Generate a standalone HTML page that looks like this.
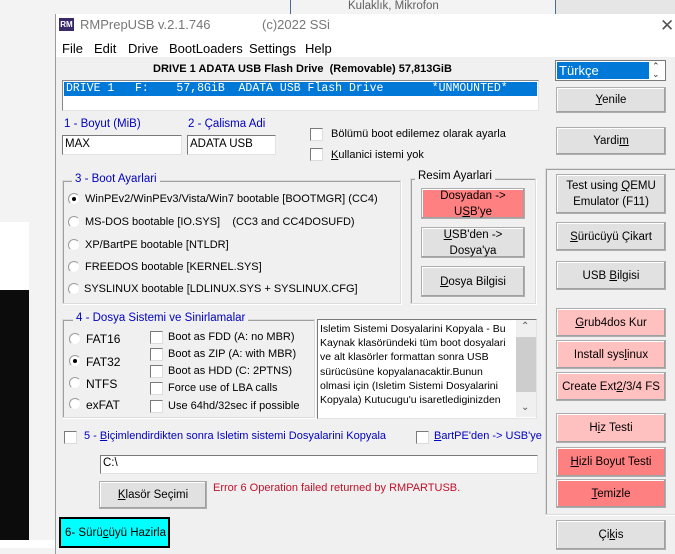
<!DOCTYPE html>
<html><head><meta charset="utf-8"><style>
*{margin:0;padding:0;box-sizing:border-box}
body{width:675px;height:548px;overflow:hidden;position:relative;background:#f3f3f3;font-family:"Liberation Sans",Arial,sans-serif;font-size:11px;color:#000}
.a{position:absolute;white-space:nowrap}
.win{position:absolute;left:55px;top:14px;width:630px;height:540px;background:#f0f0f0;border-left:1px solid #9a9a9a}
.btn{position:absolute;background:#e1e1e1;border:1px solid #adadad;box-shadow:inset -1px -1px 0 #a0a0a0,inset 1px 1px 0 #fff;display:flex;align-items:center;justify-content:center;text-align:center;line-height:16px;font-size:11.5px;white-space:nowrap}
.pink{background:#ffc0c0}.red{background:#ff8080}
.inp{position:absolute;background:#fff;border:1px solid #7a7a7a;border-right-color:#e3e3e3;border-bottom-color:#e3e3e3;padding:2px 2px;font-size:11.5px}
.grp{position:absolute;border:1px solid #dcdcdc;box-shadow:inset 1px 1px 0 #a0a0a0, 1px 1px 0 #fff}
.lg{position:absolute;background:#f0f0f0;padding:0 3px;color:#0000c0;font-size:11.5px}
.rad{position:absolute;width:12px;height:12px;border-radius:50%;border:1px solid #9a9a9a;border-right-color:#eee;border-bottom-color:#eee;background:#fff}
.rad.on::after{content:"";position:absolute;left:3px;top:3px;width:4px;height:4px;border-radius:50%;background:#000}
.cb{position:absolute;width:13px;height:13px;background:#fff;border:1px solid #7a7a7a;border-right-color:#ddd;border-bottom-color:#ddd}
.blue{color:#0000c0}
u{text-decoration:underline}
</style></head><body>
<div class="a" style="left:0;top:0;width:675px;height:14px;background:#f3f3f3"></div>
<div class="a" style="left:555px;top:0;width:120px;height:14px;background:#e6e6e6;border-left:1px solid #4a6a9a"></div>
<div class="a" style="left:290px;top:0;width:1px;height:14px;background:#4a6a9a"></div>
<div class="a" style="left:348px;top:0;color:#606060;font-size:11.5px;line-height:12px">Kulaklık, Mikrofon</div>
<div class="a" style="left:0;top:222px;width:29px;height:68px;background:#fff"></div>
<div class="a" style="left:0;top:290px;width:29px;height:250px;background:#0c0c0c"></div>
<div class="a" style="left:0;top:540px;width:55px;height:8px;background:#fff"></div>

<div class="win">
 <div class="a" style="left:0;top:0;width:630px;height:43px;background:#fff"></div>
</div>
<div class="a" style="left:59px;top:18px;width:15px;height:13px;background:#3a2a6a;color:#fff;font-size:8px;font-weight:bold;line-height:13px;text-align:center">RM</div>
<div class="a" style="left:80px;top:17px;font-size:13px;color:#777">RMPrepUSB v.2.1.746</div>
<div class="a" style="left:262px;top:17px;font-size:13px;color:#777">(c)2022 SSi</div>
<div class="a" style="left:660px;top:16px;font-size:17px;color:#555;font-weight:300">✕</div>
<div class="a" style="left:62px;top:41px;font-size:13px">File</div>
<div class="a" style="left:94px;top:41px;font-size:13px">Edit</div>
<div class="a" style="left:128px;top:41px;font-size:13px">Drive</div>
<div class="a" style="left:169px;top:41px;font-size:13px">BootLoaders</div>
<div class="a" style="left:249px;top:41px;font-size:13px">Settings</div>
<div class="a" style="left:305px;top:41px;font-size:13px">Help</div>

<div class="a" style="left:153px;top:63px;font-weight:bold;font-size:11px">DRIVE 1 ADATA USB Flash Drive&nbsp; (Removable) 57,813GiB</div>
<div class="a" style="left:62px;top:80px;width:477px;height:31px;background:#fff;border:1px solid #8a8a8a;border-right-color:#e3e3e3;border-bottom-color:#e3e3e3"></div>
<div class="a" style="left:64px;top:82px;width:473px;height:14px;background:#0078d7;color:#fff;font-family:'Liberation Mono',monospace;font-size:11.5px;line-height:14px;padding-left:2px;white-space:pre">DRIVE 1   F:    57,8GiB  ADATA USB Flash Drive       *UNMOUNTED*</div>

<div class="a blue" style="left:64px;top:118px;font-size:11.5px">1 - Boyut (MiB)</div>
<div class="a blue" style="left:188px;top:118px;font-size:11.5px">2 - Çalisma Adi</div>
<div class="inp" style="left:62px;top:135px;width:120px;height:20px">MAX</div>
<div class="inp" style="left:187px;top:135px;width:89px;height:20px">ADATA USB</div>
<div class="cb" style="left:310px;top:128px"></div>
<div class="a" style="left:331px;top:128px">Bölümü boot edilemez olarak ayarla</div>
<div class="cb" style="left:310px;top:148px"></div>
<div class="a" style="left:331px;top:149px"><u>K</u>ullanici istemi yok</div>

<div class="grp" style="left:62px;top:180px;width:339px;height:124px"></div>
<div class="lg" style="left:72px;top:173px">3 - Boot Ayarlari</div>
<div class="rad on" style="left:68px;top:193px"></div><div class="a" style="left:85px;top:193px">WinPEv2/WinPEv3/Vista/Win7 bootable [BOOTMGR] (CC4)</div>
<div class="rad" style="left:68px;top:216px"></div><div class="a" style="left:85px;top:216px">MS-DOS bootable [IO.SYS] &nbsp;&nbsp; (CC3 and CC4DOSUFD)</div>
<div class="rad" style="left:68px;top:239px"></div><div class="a" style="left:85px;top:239px">XP/BartPE bootable [NTLDR]</div>
<div class="rad" style="left:68px;top:261px"></div><div class="a" style="left:85px;top:261px">FREEDOS bootable [KERNEL.SYS]</div>
<div class="rad" style="left:68px;top:283px"></div><div class="a" style="left:84px;top:283px">SYSLINUX bootable [LDLINUX.SYS + SYSLINUX.CFG]</div>

<div class="grp" style="left:410px;top:178px;width:126px;height:126px"></div>
<div class="lg" style="left:415px;top:170px;color:#000">Resim Ayarlari</div>
<div class="btn red" style="left:421px;top:188px;width:104px;height:31px"><span>Dosyadan -&gt;<br>U<u>S</u>B'ye</span></div>
<div class="btn" style="left:421px;top:227px;width:104px;height:31px"><span><u>U</u>SB'den -&gt;<br>Dosya'ya</span></div>
<div class="btn" style="left:421px;top:266px;width:104px;height:31px"><span><u>D</u>osya Bilgisi</span></div>

<div class="a" style="left:555px;top:60px;width:111px;height:21px;background:#fff;border:1px solid #7a7a7a"></div>
<div class="a" style="left:557px;top:62px;width:92px;height:17px;background:#0078d7;color:#fff;font-size:13px;line-height:17px;padding-left:2px">Türkçe</div>
<div class="a" style="left:652px;top:62px;font-size:9px;line-height:8px;color:#333">⌃<br>⌄</div>
<div class="btn" style="left:556px;top:87px;width:110px;height:26px"><span><u>Y</u>enile</span></div>
<div class="btn" style="left:556px;top:127px;width:110px;height:28px"><span>Yardi<u>m</u></span></div>
<div class="grp" style="left:545px;top:168px;width:135px;height:347px"></div>
<div class="btn" style="left:556px;top:174px;width:110px;height:40px"><span>Test using <u>Q</u>EMU<br>Emulator (F11)</span></div>
<div class="btn" style="left:556px;top:222px;width:110px;height:29px"><span><u>S</u>ürücüyü Çikart</span></div>
<div class="btn" style="left:556px;top:261px;width:110px;height:29px"><span>USB <u>B</u>ilgisi</span></div>
<div class="btn pink" style="left:556px;top:308px;width:110px;height:29px"><span><u>G</u>rub4dos Kur</span></div>
<div class="btn pink" style="left:556px;top:340px;width:110px;height:29px"><span>Install sys<u>l</u>inux</span></div>
<div class="btn pink" style="left:556px;top:372px;width:110px;height:29px"><span>Create Ext<u>2</u>/3/4 FS</span></div>
<div class="btn pink" style="left:556px;top:413px;width:110px;height:30px"><span>H<u>i</u>z Testi</span></div>
<div class="btn red" style="left:556px;top:447px;width:110px;height:30px"><span><u>H</u>izli Boyut Testi</span></div>
<div class="btn red" style="left:556px;top:479px;width:110px;height:29px"><span><u>T</u>emizle</span></div>
<div class="btn" style="left:556px;top:520px;width:110px;height:30px"><span>Çi<u>k</u>is</span></div>

<div class="grp" style="left:62px;top:319px;width:253px;height:99px"></div>
<div class="lg" style="left:73px;top:312px">4 - Dosya Sistemi ve Sinirlamalar</div>
<div class="rad" style="left:69px;top:333px"></div><div class="a" style="left:86px;top:332px;font-size:12px">FAT16</div>
<div class="rad on" style="left:69px;top:355px"></div><div class="a" style="left:86px;top:355px;font-size:12px">FAT32</div>
<div class="rad" style="left:69px;top:377px"></div><div class="a" style="left:86px;top:377px;font-size:12px">NTFS</div>
<div class="rad" style="left:69px;top:398px"></div><div class="a" style="left:86px;top:398px;font-size:12px">exFAT</div>
<div class="cb" style="left:150px;top:331px"></div><div class="a" style="left:168px;top:331px">Boot as FDD (A: no MBR)</div>
<div class="cb" style="left:150px;top:348px"></div><div class="a" style="left:168px;top:348px">Boot as ZIP (A: with MBR)</div>
<div class="cb" style="left:150px;top:365px"></div><div class="a" style="left:168px;top:365px">Boot as HDD (C: 2PTNS)</div>
<div class="cb" style="left:150px;top:382px"></div><div class="a" style="left:168px;top:382px">Force use of LBA calls</div>
<div class="cb" style="left:150px;top:400px"></div><div class="a" style="left:168px;top:400px">Use 64hd/32sec if possible</div>

<div class="a" style="left:317px;top:319px;width:220px;height:100px;background:#fff;border:1px solid #7a7a7a;border-right-color:#e3e3e3;border-bottom-color:#e3e3e3"></div>
<div class="a" style="left:320px;top:322px;font-size:10.5px;line-height:14.2px;white-space:pre">Isletim Sistemi Dosyalarini Kopyala - Bu
Kaynak klasöründeki tüm boot dosyalari
ve alt klasörler formattan sonra USB
sürücüsüne kopyalanacaktir.Bunun
olmasi için (Isletim Sistemi Dosyalarini
Kopyala) Kutucugu'u isaretlediginizden</div>
<div class="a" style="left:516px;top:320px;width:20px;height:97px;background:#f0f0f0"></div>
<div class="a" style="left:516px;top:337px;width:20px;height:55px;background:#cdcdcd"></div>
<div class="a" style="left:521px;top:321px;font-size:10px;color:#555">⌃</div>
<div class="a" style="left:521px;top:402px;font-size:10px;color:#555">⌄</div>

<div class="cb" style="left:64px;top:431px"></div>
<div class="a blue" style="left:84px;top:430px">5 - <u>B</u>içimlendirdikten sonra Isletim sistemi Dosyalarini Kopyala</div>
<div class="cb" style="left:416px;top:431px"></div>
<div class="a blue" style="left:434px;top:430px"><u>B</u>artPE'den -&gt; USB'ye</div>

<div class="inp" style="left:100px;top:455px;width:438px;height:19px;padding-top:1px">C:\</div>
<div class="btn" style="left:99px;top:481px;width:108px;height:28px"><span><u>K</u>lasör Seçimi</span></div>
<div class="a" style="left:213px;top:482px;color:#c0102a">Error 6 Operation failed returned by RMPARTUSB.</div>

<div class="btn" style="left:59px;top:517px;width:111px;height:31px;background:#00ffff;border:2px solid #000;box-shadow:none;justify-content:flex-start;padding-left:4px"><span>6- Sürü<u>c</u>üyü Hazirla</span></div>
</body></html>
